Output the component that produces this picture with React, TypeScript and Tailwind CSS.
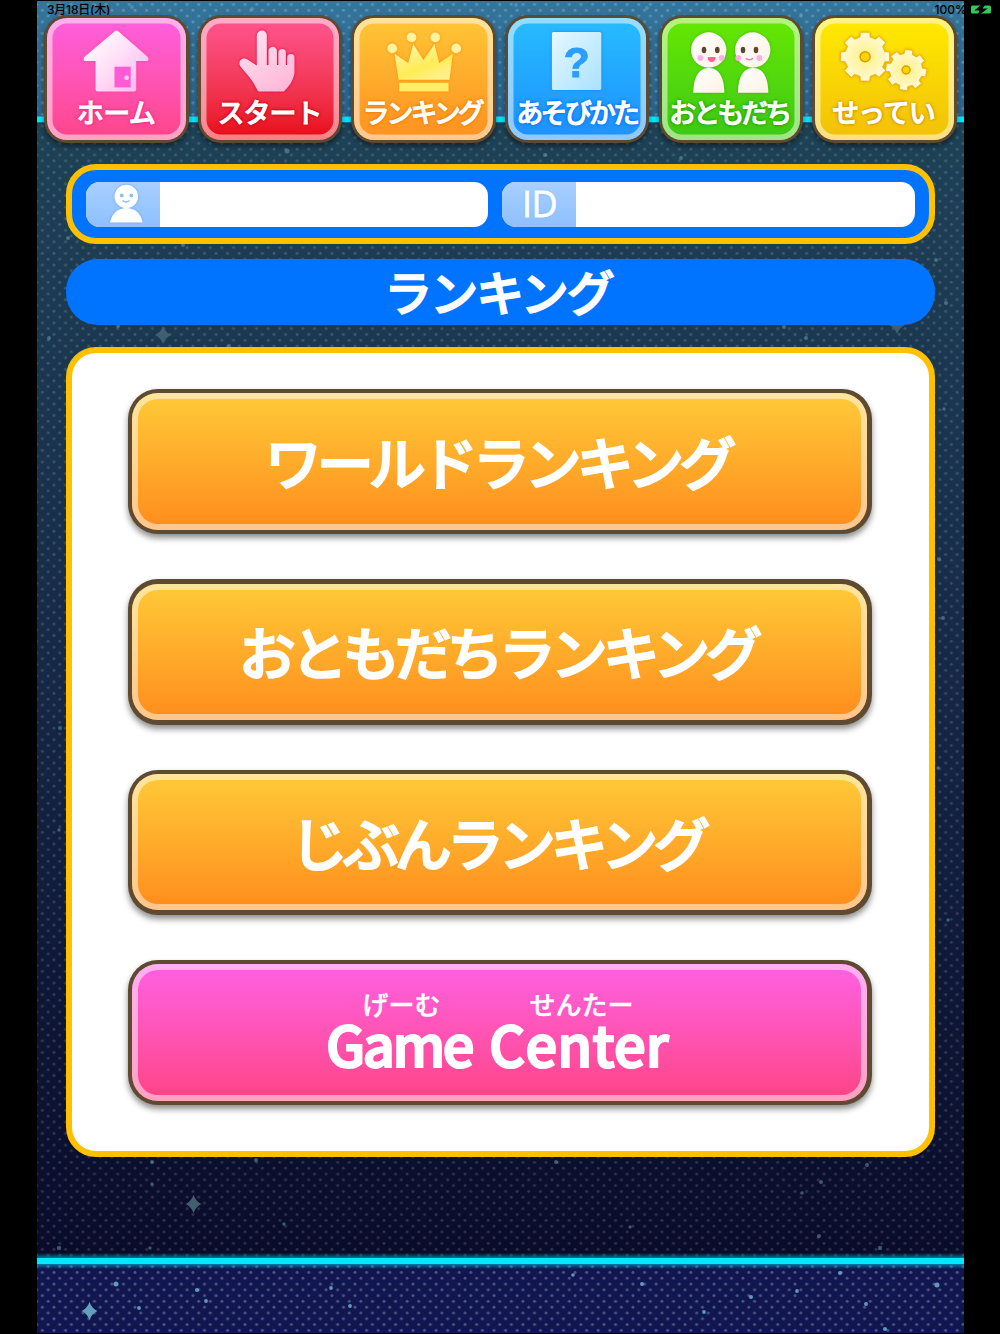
import React from 'react';

const JP = "font-['Noto_Sans_CJK_JP',sans-serif]";

/* ---------- background ---------- */

// x, y, radius
const dimStars = [
  [132, 7, 2], [252, 9, 2], [647, 8, 2], [516, 5, 2], [801, 15, 2], [287, 151, 2.5], [545, 155, 2], [681, 158, 2],
  [183, 245, 2], [118, 326, 2], [49, 338, 2], [229, 346, 2], [936, 260, 2], [946, 303, 2], [806, 338, 2], [784, 327, 2],
  [68, 238, 2], [944, 409, 1.7], [943, 618, 2], [938, 768, 1.7], [59, 830, 1.7], [152, 1162, 2], [152, 1184, 1.7], [256, 1160, 2],
  [284, 1224, 1.7], [59, 1248, 2.2], [150, 1248, 1.7], [556, 1162, 2], [867, 1165, 2], [821, 1182, 2],
  [802, 1193, 1.8], [630, 1227, 1.7], [819, 1236, 2], [880, 1248, 2.2], [60, 728, 2], [948, 920, 1.7], [939, 559, 2],
];

const brightStars = [
  [116, 1284, 2.5], [197, 1290, 2.1], [206, 1301, 1.9], [139, 1308, 1.9], [331, 1288, 1.9], [350, 1306, 1.9],
  [573, 1275, 1.8], [642, 1284, 2], [751, 1297, 2], [797, 1291, 1.9], [704, 1312, 1.9], [840, 1273, 2],
  [866, 1304, 2], [937, 1285, 2.5], [885, 1329, 2],
];

const Sparkle = ({ x, y, fill }: { x: number; y: number; fill: string }) => (
  <path
    transform={`translate(${x} ${y})`}
    d="M0-9Q2.500-2.500 8 0Q2.500 2.500 0 9Q-2.500 2.500-8 0Q-2.500-2.500 0-9Z"
    fill={fill}
  />
);

const Sky: React.FC = () => (
  <svg className="absolute inset-0" width="1000" height="1334" viewBox="0 0 1000 1334">
    <defs>
      <linearGradient id="skyTop" x1="0" y1="0" x2="0" y2="1">
        <stop offset="0" stopColor="#34759b" />
        <stop offset="1" stopColor="#2b638c" />
      </linearGradient>
      <linearGradient id="skyMain" x1="0" y1="0" x2="0" y2="1">
        <stop offset="0" stopColor="#1d4256" />
        <stop offset="0.1" stopColor="#1d3d54" />
        <stop offset="0.45" stopColor="#162a48" />
        <stop offset="0.75" stopColor="#0e1836" />
        <stop offset="1" stopColor="#0a0b2a" />
      </linearGradient>
      <linearGradient id="glow" x1="0" y1="0" x2="0" y2="1">
        <stop offset="0" stopColor="#00d8ff" stopOpacity="0" />
        <stop offset="0.5" stopColor="#00d8ff" stopOpacity="0.8" />
        <stop offset="1" stopColor="#00d8ff" stopOpacity="0" />
      </linearGradient>
      <pattern id="dots" x="36.6" y="1.2" width="11.58" height="11.58" patternUnits="userSpaceOnUse">
        <circle cx="5.79" cy="9" r="1.5" fill="#fff" />
        <circle cx="0" cy="3.2" r="1.5" fill="#fff" />
        <circle cx="11.58" cy="3.2" r="1.5" fill="#fff" />
      </pattern>
    </defs>
    <rect x="37" y="1" width="927" height="117" fill="url(#skyTop)" />
    <rect x="37" y="120" width="927" height="1140" fill="url(#skyMain)" />
    <rect x="37" y="1260" width="927" height="73" fill="#10164f" />
    <rect x="37" y="1" width="927" height="118" fill="url(#dots)" opacity="0.21" />
    <rect x="37" y="119" width="927" height="1140" fill="url(#dots)" opacity="0.15" />
    <rect x="37" y="1260" width="927" height="73" fill="url(#dots)" opacity="0.27" />
    {dimStars.map(([x, y, r], i) => (
      <circle key={i} cx={x} cy={y} r={r} fill="#6fa3b4" opacity="0.5" />
    ))}
    {brightStars.map(([x, y, r], i) => (
      <circle key={i} cx={x} cy={y} r={r} fill="#6db0cf" opacity="0.85" />
    ))}
    <Sparkle x={163} y={335} fill="#3d6073" />
    <Sparkle x={897} y={325} fill="#3d6073" />
    <Sparkle x={193.5} y={1204} fill="#41606f" />
    <Sparkle x={89.5} y={1311} fill="#659ebc" />
    <rect x="37" y="1253" width="927" height="16" fill="url(#glow)" />
    <rect x="37" y="116.5" width="927" height="5.8" fill="#00e8ff" />
    <rect x="37" y="1258" width="927" height="6" fill="#00e8ff" />
  </svg>
);

/* ---------- tab icons ---------- */

const IconFrame: React.FC<{ children: React.ReactNode; glow: string }> = ({ children, glow }) => (
  <svg
    width="138"
    height="77"
    viewBox="3.2 3 138 77"
    className="block shrink-0"
    style={{ filter: `drop-shadow(0 0 1.5px ${glow})` }}
  >
    {children}
  </svg>
);

const HomeIcon = () => (
  <IconFrame glow="#ff3fa0">
    <defs>
      <linearGradient id="home" x1="0" y1="0" x2="1" y2="1">
        <stop offset="0.25" stopColor="#fff2fb" />
        <stop offset="1" stopColor="#ffb3ee" />
      </linearGradient>
    </defs>
    <path
      d="M70.600 16.400Q72.700 14.600 74.800 16.400L104 42Q106 46 102.500 46H92.400V74.400Q92.400 76.400 90.400 76.400H53.700Q51.700 76.400 51.700 74.400V46H42Q38.500 46 40.500 42Z"
      fill="url(#home)"
    />
    <rect x="70.7" y="51.7" width="16.2" height="20.7" fill="#ff5ad6" />
    <circle cx="82.8" cy="62.7" r="2.3" fill="#ffd5f5" />
  </IconFrame>
);

const HandIcon = () => (
  <IconFrame glow="#e8003c">
    <defs>
      <linearGradient id="hand" gradientUnits="userSpaceOnUse" x1="50" y1="16" x2="90" y2="76">
        <stop offset="0" stopColor="#ffe3ef" />
        <stop offset="1" stopColor="#ffb5d8" />
      </linearGradient>
    </defs>
    <path
      d="M59 20.500a5 5 0 0 1 10 0V50h1.700V36a4.200 4.200 0 0 1 8.400 0V50h1.500V37.200a3.800 3.800 0 0 1 7.500 0V50h1.200V42.600a3.700 3.700 0 0 1 7.400 0V57C96.500 64 91 72 86.500 76Q86 76.600 85 76.600H61.500Q60.200 76.600 59.500 75C55 65 48 58 43.500 52.500C38.500 47 44.500 41 50 44.800L59 50.500Z"
      fill="url(#hand)"
    />
  </IconFrame>
);

const CrownIcon = () => (
  <IconFrame glow="#ff8a00">
    <defs>
      <linearGradient id="crown" x1="0" y1="0" x2="0.6" y2="1">
        <stop offset="0" stopColor="#fff6b8" />
        <stop offset="0.7" stopColor="#ffec55" />
        <stop offset="1" stopColor="#fff08a" />
      </linearGradient>
    </defs>
    <path
      d="M42.700 38.700L56.400 48L61.400 29L71.700 45L82.700 29L87.400 48L101 38.700L97.700 64.700H46.700Z"
      fill="url(#crown)"
    />
    <rect x="47.4" y="67.7" width="49.3" height="8.7" fill="#ffee66" />
    <g fill="#fff3a0">
      <circle cx="40.4" cy="33.4" r="4.9" />
      <circle cx="59.7" cy="22.4" r="4.9" />
      <circle cx="83.4" cy="22.4" r="4.9" />
      <circle cx="104.4" cy="33.4" r="4.9" />
    </g>
  </IconFrame>
);

const HelpIcon = () => (
  <IconFrame glow="#1583ff">
    <defs>
      <linearGradient id="help" x1="0" y1="0" x2="1" y2="1">
        <stop offset="0" stopColor="#e6f8ff" />
        <stop offset="1" stopColor="#a9e2ff" />
      </linearGradient>
    </defs>
    <rect x="47.1" y="17" width="49.4" height="58" rx="1.5" fill="url(#help)" />
    <text
      x="71.8"
      y="61.8"
      textAnchor="middle"
      fill="#2a9dff"
      stroke="#2a9dff"
      strokeWidth="0.8"
      className="font-['Liberation_Sans',sans-serif] text-[43px] font-bold"
    >
      ?
    </text>
  </IconFrame>
);

const FriendsIcon = () => (
  <IconFrame glow="#39b800">
    <defs>
      <linearGradient id="friend" x1="0" y1="0" x2="1" y2="1">
        <stop offset="0" stopColor="#ffffff" />
        <stop offset="1" stopColor="#fff1e4" />
      </linearGradient>
    </defs>
    <g fill="url(#friend)">
      <path d="M34.500 77.700C34.500 66 38 53 50 53S65.500 66 65.500 77.700Z" />
      <path d="M79.200 77.700C79.200 66 82.500 53 94.300 53S109.500 66 109.500 77.700Z" />
      <circle cx="49.9" cy="35" r="17.7" />
      <circle cx="93.9" cy="35" r="17.7" />
    </g>
    <g fill="#5d4630">
      <ellipse cx="45.2" cy="35" rx="2.3" ry="3.3" />
      <ellipse cx="58.5" cy="35" rx="2.3" ry="3.3" />
      <ellipse cx="84.2" cy="35" rx="2.3" ry="3.3" />
      <ellipse cx="97.2" cy="35" rx="2.3" ry="3.3" />
    </g>
    <g fill="#ffaee6">
      <circle cx="41.5" cy="43" r="2.9" />
      <circle cx="62.9" cy="43" r="2.9" />
      <circle cx="79.4" cy="43" r="2.9" />
      <circle cx="100.5" cy="43" r="2.9" />
    </g>
    <path d="M48.700 42.300Q52.800 41.500 57 42.300Q56.500 47 52.800 47Q49.200 47 48.700 42.300Z" fill="#ff5f96" />
    <path d="M87 43.300Q90.500 46.500 94.200 43.300" fill="none" stroke="#ff6ca0" strokeWidth="1.3" />
  </IconFrame>
);

// outline of a cog wheel with eight teeth
const cog = (cx: number, cy: number, outer: number, inner: number, turn: number) => {
  const points: string[] = [];
  for (let i = 0; i < 8; i++) {
    const mid = (i * Math.PI) / 4 + turn;
    [
      [inner, -0.25],
      [outer, -0.19],
      [outer, 0.19],
      [inner, 0.25],
    ].forEach(([r, a]) => {
      points.push(`${(cx + r * Math.cos(mid + a)).toFixed(2)} ${(cy + r * Math.sin(mid + a)).toFixed(2)}`);
    });
  }
  return `M${points.join('L')}Z`;
};

const GearIcon = () => (
  <IconFrame glow="#e09a00">
    <defs>
      <radialGradient id="gear">
        <stop offset="0.3" stopColor="#fff39b" />
        <stop offset="1" stopColor="#fffad8" />
      </radialGradient>
    </defs>
    <g fill="url(#gear)" stroke="#e8b820" strokeWidth="0.8" strokeLinejoin="round">
      <path d={cog(53.3, 41.7, 24.8, 20.3, 0)} />
      <path d={cog(94.3, 55, 20.6, 16.6, 0.14)} />
    </g>
    <g fill="#fbd500" stroke="#dc9c00" strokeWidth="1.5">
      <circle cx="53.3" cy="41.7" r="5" />
      <circle cx="94.3" cy="55" r="4" />
    </g>
  </IconFrame>
);

/* ---------- header tabs ---------- */

const tabs = [
  {
    label: 'ホーム',
    icon: <HomeIcon />,
    card: 'from-[#ff5fe0] to-[#ff4488]',
    text: 'tracking-[-0.5px] pr-px [text-shadow:0_0_2px_#f0287e,0_0_3px_#f0287e,0_0_4px_#f0287e]',
  },
  {
    label: 'スタート',
    icon: <HandIcon />,
    card: 'from-[#ff5590] to-[#e80008]',
    text: 'tracking-[-1px] pr-px [text-shadow:0_0_2px_#c00014,0_0_3px_#c00014,0_0_4px_#c00014]',
  },
  {
    label: 'ランキング',
    icon: <CrownIcon />,
    card: 'from-[#ffc636] to-[#ff9020]',
    text: 'tracking-[-3px] pr-[3px] [text-shadow:0_0_2px_#f07800,0_0_3px_#f07800,0_0_4px_#f07800]',
  },
  {
    label: 'あそびかた',
    icon: <HelpIcon />,
    card: 'from-[#28bcff] to-[#2090ff]',
    text: 'tracking-[-2.8px] pr-px [text-shadow:0_0_2px_#0a6cf5,0_0_3px_#0a6cf5,0_0_4px_#0a6cf5]',
  },
  {
    label: 'おともだち',
    icon: <FriendsIcon />,
    card: 'from-[#66e800] to-[#3cc814]',
    text: 'tracking-[-3px] pr-[3px] [text-shadow:0_0_2px_#209a00,0_0_3px_#209a00,0_0_4px_#209a00]',
  },
  {
    label: 'せってい',
    icon: <GearIcon />,
    card: 'from-[#ffea00] to-[#f2c008]',
    text: 'tracking-[-1px] pr-[2px] [text-shadow:0_0_2px_#cc8800,0_0_3px_#cc8800,0_0_4px_#cc8800]',
  },
];

const TabBar: React.FC = () => (
  <nav className="flex justify-between px-[7.3px]">
    {tabs.map((tab) => (
      <div
        key={tab.label}
        className="h-[127.5px] w-[144.4px] rounded-[23px] bg-[#5e4a30] p-[3px] shadow-[0_3px_5px_rgba(0,0,0,0.45)]"
      >
        <div
          className={`flex h-full flex-col items-center rounded-[20px] bg-linear-to-b shadow-[inset_0_0_0_5.5px_rgba(255,255,255,0.5)] ${tab.card}`}
        >
          {tab.icon}
          <span
            className={`${JP} -mt-px text-[27px] leading-[36px] font-medium whitespace-nowrap text-white [-webkit-text-stroke:0.9px_white] ${tab.text}`}
          >
            {tab.label}
          </span>
        </div>
      </div>
    ))}
  </nav>
);

/* ---------- player info ---------- */

const PersonIcon = () => (
  <svg width="74" height="45" viewBox="0 0 74 45" className="drop-shadow-[0_0_1px_#5c9ff5]">
    <circle cx="40.3" cy="14.5" r="11.8" fill="#fff" />
    <path d="M24 40.500C26 31 32 26 40.300 26S55 31 56.700 40.500Z" fill="#fff" />
    <circle cx="35.7" cy="13.5" r="1.9" fill="#8fbdf8" />
    <circle cx="45.3" cy="13.5" r="1.9" fill="#8fbdf8" />
    <path d="M36.500 18.500Q40 21.500 43.500 18.500" fill="none" stroke="#8fbdf8" strokeWidth="1.4" />
  </svg>
);

const InfoField: React.FC<{ width: string; children: React.ReactNode }> = ({ width, children }) => (
  <div className={`flex h-[45px] rounded-[14px] bg-white ${width}`}>
    <div className="flex w-[74px] items-center justify-center rounded-l-[14px] bg-linear-to-b from-[#a8cfff] to-[#8ec0ff]">
      {children}
    </div>
  </div>
);

const InfoBar: React.FC = () => (
  <div className="flex h-[79.5px] items-center gap-[14px] rounded-[30px] border-[6px] border-[#ffc000] bg-[#0074ff] px-[14px]">
    <InfoField width="w-[401.5px]">
      <PersonIcon />
    </InfoField>
    <InfoField width="w-[413px]">
      <span className="pb-[2px] pl-[2px] font-['Open_Sans',sans-serif] text-[36px] leading-[45px] tracking-[-0.5px] text-white [-webkit-text-stroke:0.8px_white] [text-shadow:0_0_2px_#5c9ff5]">
        ID
      </span>
    </InfoField>
  </div>
);

/* ---------- ranking menu ---------- */

const MenuButton: React.FC<{ color: string; children: React.ReactNode }> = ({ color, children }) => (
  <button className="block h-[145.3px] w-[744px] rounded-[30px] bg-[#5e4a30] p-[4.5px] shadow-[0_4px_6px_rgba(0,0,0,0.45)]">
    <div
      className={`flex h-full items-center justify-center rounded-[26px] bg-linear-to-b text-white shadow-[inset_0_0_0_6px_rgba(255,255,255,0.5)] ${color}`}
    >
      {children}
    </div>
  </button>
);

const rankings = ['ワールドランキング', 'おともだちランキング', 'じぶんランキング'];

const gameCenter = [
  { ruby: 'げーむ', word: 'Game', spacing: 'tracking-[-2.5px]' },
  { ruby: 'せんたー', word: 'Center', spacing: 'tracking-[0.2px]' },
];

const App: React.FC = () => {
  return (
    <div className="relative h-[1334px] w-[1000px] overflow-hidden bg-black">
      <Sky />

      <div className="relative flex h-full flex-col pr-[36px] pl-[37px]">
        <div className="flex h-[15.3px] shrink-0 items-center justify-between pt-[4px] pl-[10px] text-[12px] font-medium text-black">
          <span className="font-['Inter','Noto_Sans_CJK_JP',sans-serif] tracking-[-0.2px]">3月18日(木)</span>
          <span className="mr-[-27px] flex items-center gap-[4px]">
            <span className="font-['Inter',sans-serif]">100%</span>
            <svg width="20" height="9" viewBox="0 0 20 9">
              <rect y="0.5" width="20" height="8" rx="1.5" fill="#34c759" />
              <path d="M12-1L5 5h4.500l-2.500 5L15 4h-4.500l3.500-5Z" fill="#000" stroke="#000" strokeWidth="1.2" />
            </svg>
          </span>
        </div>

        <TabBar />

        <div className="mt-[21.7px] px-[29px]">
          <InfoBar />

          <h1
            className={`${JP} mt-[14.7px] flex h-[66.5px] items-center justify-center rounded-[32px] bg-[#0074ff] pr-[4px] pb-[3px] text-[48px] font-medium tracking-[-2px] text-white [-webkit-text-stroke:1.6px_white]`}
          >
            ランキング
          </h1>

          <main className="mt-[21.8px] flex h-[810px] flex-col items-center gap-[45px] rounded-[30px] border-[6px] border-[#ffc000] bg-white pt-[36px] pr-[2px]">
            {rankings.map((name) => (
              <MenuButton key={name} color="from-[#ffca38] to-[#ff8c1c]">
                <span
                  className={`${JP} pr-[3px] pb-[2px] text-[57px] leading-none font-medium tracking-[-5px] [-webkit-text-stroke:2px_white]`}
                >
                  {name}
                </span>
              </MenuButton>
            ))}
            <MenuButton color="from-[#ff60e4] to-[#ff4284]">
              <div className="flex gap-[17px] pr-[4px] pb-[4px]">
                {gameCenter.map(({ ruby, word, spacing }) => (
                  <div key={word} className="flex flex-col items-center">
                    <span
                      className={`${JP} pl-[5px] text-[26px] leading-[29px] font-medium [-webkit-text-stroke:0.4px_white]`}
                    >
                      {ruby}
                    </span>
                    <span
                      className={`${JP} -mt-[4px] text-[56px] leading-[58px] font-medium [-webkit-text-stroke:2.2px_white] ${spacing}`}
                    >
                      {word}
                    </span>
                  </div>
                ))}
              </div>
            </MenuButton>
          </main>
        </div>
      </div>
    </div>
  );
};

export default App;
